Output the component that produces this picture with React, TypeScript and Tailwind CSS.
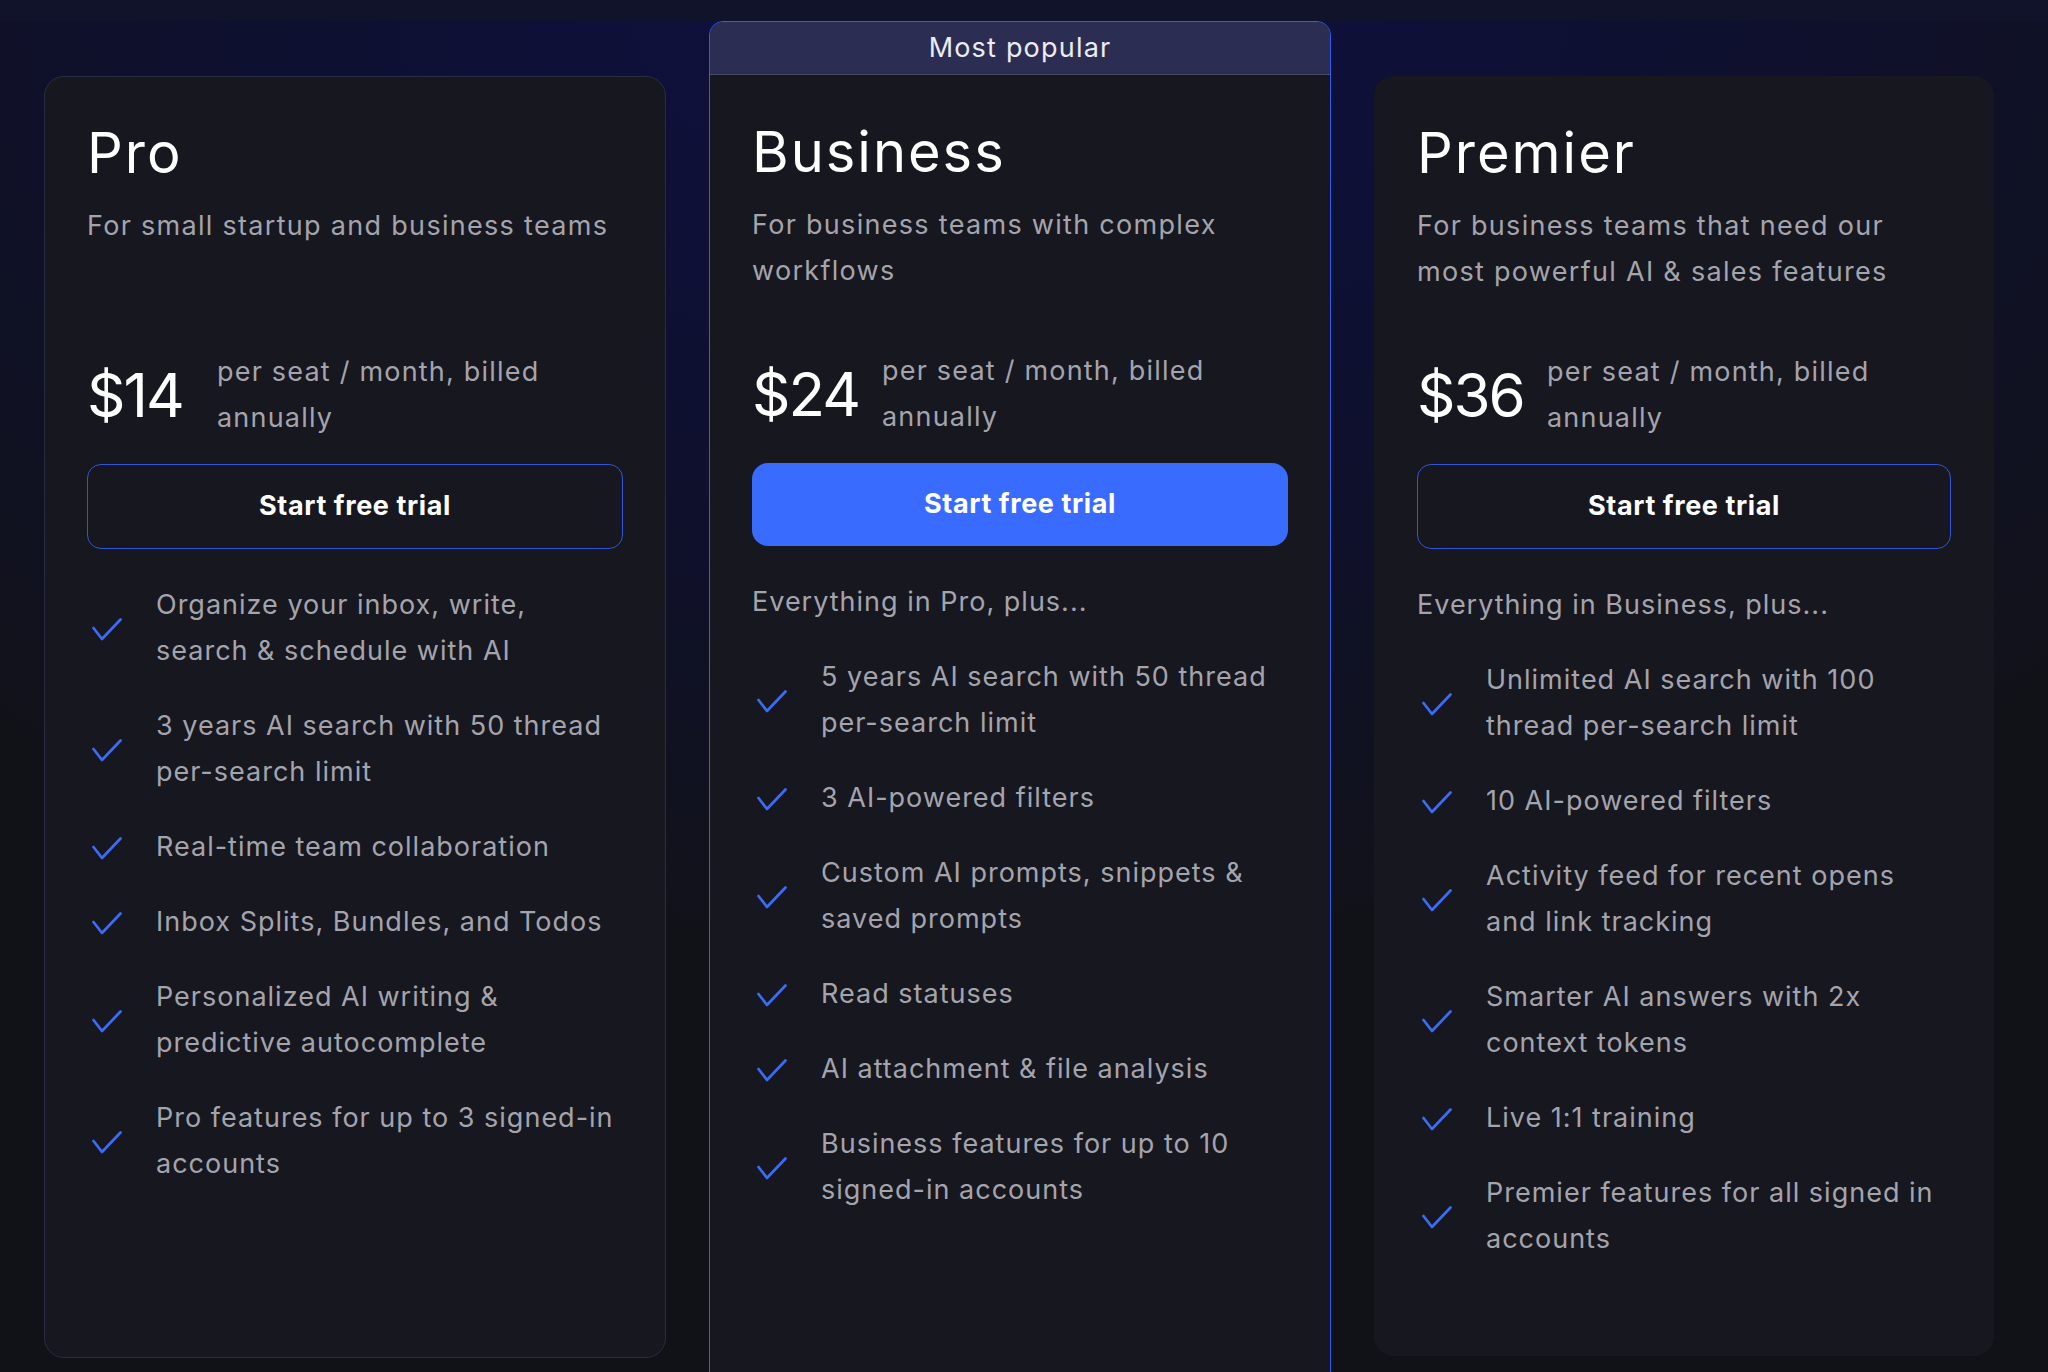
import React from "react";

type Plan = {
  name: string;
  desc: string[];
  price: string;
  intro?: string;
  features: string[][];
  variant: "outline" | "popular" | "plain";
};

const plans: Plan[] = [
  {
    name: "Pro",
    desc: ["For small startup and business teams"],
    price: "$14",
    variant: "outline",
    features: [
      ["Organize your inbox, write,", "search & schedule with AI"],
      ["3 years AI search with 50 thread", "per-search limit"],
      ["Real-time team collaboration"],
      ["Inbox Splits, Bundles, and Todos"],
      ["Personalized AI writing &", "predictive autocomplete"],
      ["Pro features for up to 3 signed-in", "accounts"],
    ],
  },
  {
    name: "Business",
    desc: ["For business teams with complex", "workflows"],
    price: "$24",
    variant: "popular",
    intro: "Everything in Pro, plus...",
    features: [
      ["5 years AI search with 50 thread", "per-search limit"],
      ["3 AI-powered filters"],
      ["Custom AI prompts, snippets &", "saved prompts"],
      ["Read statuses"],
      ["AI attachment & file analysis"],
      ["Business features for up to 10", "signed-in accounts"],
    ],
  },
  {
    name: "Premier",
    desc: ["For business teams that need our", "most powerful AI & sales features"],
    price: "$36",
    variant: "plain",
    intro: "Everything in Business, plus...",
    features: [
      ["Unlimited AI search with 100", "thread per-search limit"],
      ["10 AI-powered filters"],
      ["Activity feed for recent opens", "and link tracking"],
      ["Smarter AI answers with 2x", "context tokens"],
      ["Live 1:1 training"],
      ["Premier features for all signed in", "accounts"],
    ],
  },
];

const Check = () => (
  <svg width="30" height="23" viewBox="0 0 30 23" fill="none">
    <path d="M1.5 10 L10 21 L28.5 1.5" stroke="#3b6cf6" strokeWidth="2.7" strokeLinecap="round" strokeLinejoin="round" />
  </svg>
);

const Lines = ({ lines }: { lines: string[] }) => (
  <>
    {lines.map((l, i) => (
      <span key={i} className="block whitespace-nowrap">
        {l}
      </span>
    ))}
  </>
);

const CardBody = ({ plan }: { plan: Plan }) => {
  return (
    <>
      {/* title + description */}
      <h2 className="text-[56px] leading-[56px] text-white tracking-[2px]">{plan.name}</h2>
      <p className="mt-[22px] h-[92px] text-[27px] leading-[46px] text-[#a4a4ad] tracking-[1.3px]">
        <Lines lines={plan.desc} />
      </p>

      {/* price */}
      <div className="mt-[54px] flex items-center">
        <div className="w-[130px] shrink-0 text-[60px] leading-[60px] text-white tracking-[-2px]">{plan.price}</div>
        <p className="text-[27px] leading-[46px] text-[#a4a4ad] tracking-[1.2px]">
          <Lines lines={["per seat / month, billed", "annually"]} />
        </p>
      </div>

      {plan.variant === "popular" ? (
        <button className="mt-[23px] h-[83px] w-full rounded-[16px] bg-[#3a6bff] text-[27px] font-bold text-white tracking-[0.6px]">
          Start free trial
        </button>
      ) : (
        <button className="mt-[23px] h-[85px] w-full rounded-[14px] border-[1.5px] border-[#2d56d8] text-[27px] font-bold text-white tracking-[0.6px]">
          Start free trial
        </button>
      )}

      {/* features */}
      <ul className="mt-[33px] flex flex-col gap-[29px] text-[27px] leading-[46px] text-[#a4a4ad] tracking-[1px]">
        {plan.intro && <li>{plan.intro}</li>}
        {plan.features.map((f, i) => (
          <li key={i} className="flex items-center">
            <span className="w-[69px] shrink-0 pl-[5px] pt-[3px]">
              <Check />
            </span>
            <span>
              <Lines lines={f} />
            </span>
          </li>
        ))}
      </ul>
    </>
  );
};

export default function App() {
  return (
    <div className="h-[1372px] w-[2048px] overflow-hidden bg-[radial-gradient(ellipse_75%_70%_at_48%_0%,#0f1142_0%,#0e1033_40%,#111218_100%)] font-['Inter','Noto_Sans',sans-serif]">
      {/* top strip */}
      <div className="h-[21px] bg-[#11132b]" />

      <div className="flex items-start gap-[43px] pl-[44px]">
        {/* Pro */}
        <div className="mt-[55px] h-[1282px] w-[622px] rounded-[20px] border border-[#2a2c44] bg-[#17171f] px-[42px] pt-[48px]">
          <CardBody plan={plans[0]} />
        </div>

        {/* Business */}
        <div className="flex h-[1360px] w-[622px] flex-col rounded-t-[14px] border-[1.5px] border-[#2f5ef0] bg-[#17171f]">
          <div className="flex h-[53px] items-center justify-center rounded-t-[13px] border-b border-[#4a4b62] bg-[#2c2d52] text-[27px] text-[#ececf4] tracking-[1.2px]">
            Most popular
          </div>
          <div className="flex-1 px-[42px] pt-[49px]">
            <CardBody plan={plans[1]} />
          </div>
        </div>

        {/* Premier */}
        <div className="mt-[55px] h-[1280px] w-[620px] rounded-[20px] bg-[#17171f] px-[43px] pt-[49px]">
          <CardBody plan={plans[2]} />
        </div>
      </div>
    </div>
  );
}
